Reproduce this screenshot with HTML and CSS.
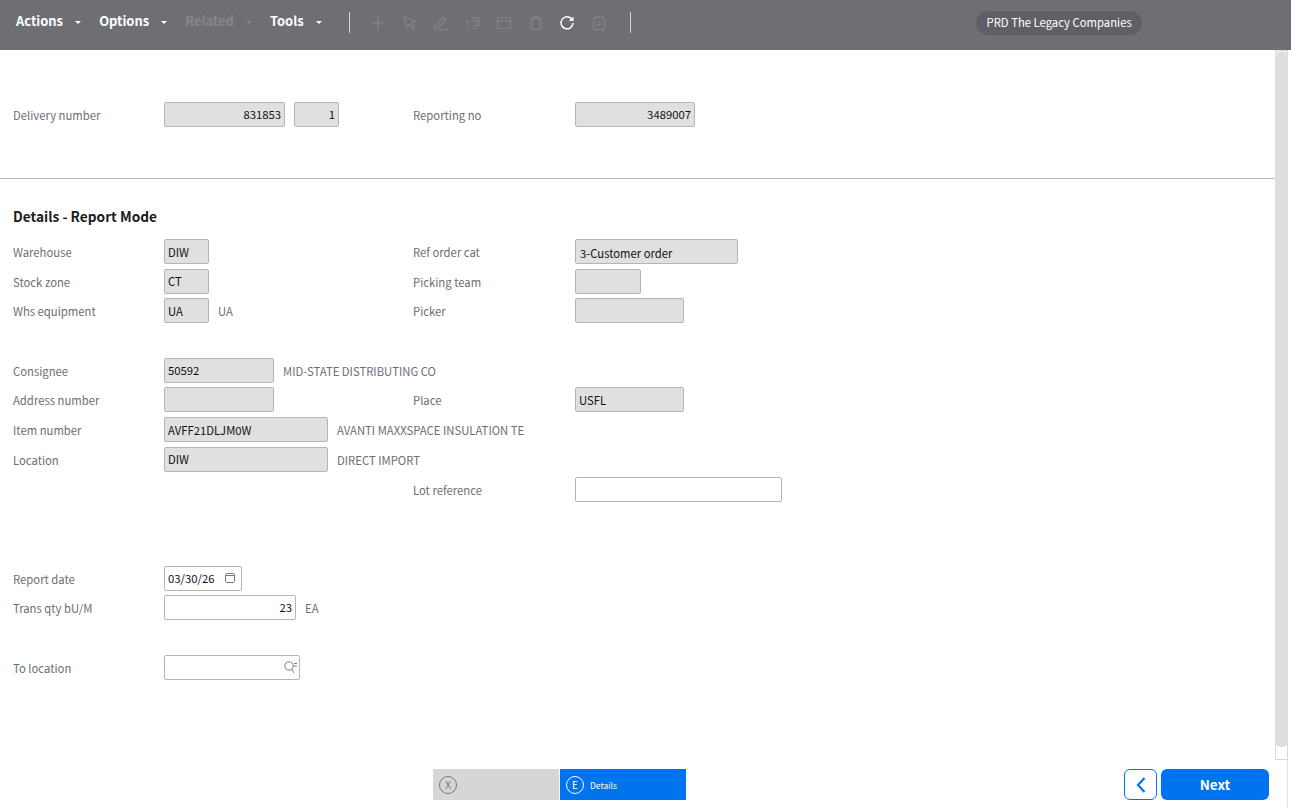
FILE: index.html
```html
<!DOCTYPE html>
<html lang="en">
<head>
<meta charset="utf-8">
<title>Details - Report Mode</title>
<link rel="stylesheet" href="styles.css">
</head>
<body>
<header class="topbar">
  <nav class="menus">
    <span class="menu">Actions<i class="caret"></i></span>
    <span class="menu">Options<i class="caret"></i></span>
    <span class="menu off">Related<i class="caret"></i></span>
    <span class="menu">Tools<i class="caret"></i></span>
  </nav>
  <div class="tools">
    <svg class="ico" viewBox="0 0 16 16"><path d="M8 1v14M1 8h14"/></svg>
    <svg class="ico" viewBox="0 0 16 16"><path d="M2 2l12 4-4.500 2 3 4.500-2 1.500-3-4.500-2.500 3z"/></svg>
    <svg class="ico" viewBox="0 0 16 16"><path d="M1.500 11.500L10.500 2.500l2.500 2.500L4 14H1.500zM6 14.500h9"/></svg>
    <svg class="ico" viewBox="0 0 16 16"><path d="M7 2.500h7v8h-3.500M8.500 5h3v3"/><path stroke-dasharray="2 1.500" d="M2.500 6.500h7.500v7.500H2.500z"/></svg>
    <svg class="ico" viewBox="0 0 16 16"><rect x="1.500" y="2.500" width="13" height="11" rx="1.500"/><path d="M1.500 6h13"/></svg>
    <svg class="ico" viewBox="0 0 16 16"><path d="M2 4h12M6 4V1.500h4V4M3.500 4v10.500h9V4"/></svg>
    <svg class="ico on" viewBox="0 0 16 16"><path d="M13 4.500A6 6 0 1 0 14 8"/><path class="fill" d="M14.500 1.500v4.500H10z"/></svg>
    <svg class="ico" viewBox="0 0 16 16"><rect x="2.500" y="2.500" width="11" height="12" rx="1.500"/><path d="M5 1v2M8 1v2M11 1v2M5.500 7h5M5.500 10h5"/></svg>
  </div>
  <div class="company">PRD The Legacy Companies</div>
</header>

<div class="body">
  <main class="content">
    <section class="head-form">
      <div class="row">
        <label class="lbl">Delivery number</label>
        <div class="cell">
          <span class="fld ro num w121">831853</span>
          <span class="fld ro num w45">1</span>
        </div>
        <label class="lbl">Reporting no</label>
        <div class="cell"><span class="fld ro num w120">3489007</span></div>
      </div>
    </section>
    <hr class="rule">
    <h2 class="title">Details - Report Mode</h2>
    <section class="form">
      <div class="row">
        <label class="lbl">Warehouse</label>
        <div class="cell"><span class="fld ro w45">DIW</span></div>
        <label class="lbl">Ref order cat</label>
        <div class="cell"><span class="fld ro sel w163">3-Customer order</span></div>
      </div>
      <div class="row">
        <label class="lbl">Stock zone</label>
        <div class="cell"><span class="fld ro w45">CT</span></div>
        <label class="lbl">Picking team</label>
        <div class="cell"><span class="fld ro w66"></span></div>
      </div>
      <div class="row">
        <label class="lbl">Whs equipment</label>
        <div class="cell"><span class="fld ro w45">UA</span><span class="desc">UA</span></div>
        <label class="lbl">Picker</label>
        <div class="cell"><span class="fld ro w109"></span></div>
      </div>
      <div class="row"></div>
      <div class="row">
        <label class="lbl">Consignee</label>
        <div class="cell"><span class="fld ro w110">50592</span><span class="desc">MID-STATE DISTRIBUTING CO</span></div>
      </div>
      <div class="row">
        <label class="lbl">Address number</label>
        <div class="cell"><span class="fld ro w110"></span></div>
        <label class="lbl">Place</label>
        <div class="cell"><span class="fld ro w109">USFL</span></div>
      </div>
      <div class="row">
        <label class="lbl">Item number</label>
        <div class="cell"><span class="fld ro w164">AVFF21DLJM0W</span><span class="desc">AVANTI MAXXSPACE INSULATION TE</span></div>
      </div>
      <div class="row">
        <label class="lbl">Location</label>
        <div class="cell"><span class="fld ro w164">DIW</span><span class="desc">DIRECT IMPORT</span></div>
      </div>
      <div class="row">
        <span></span><span></span>
        <label class="lbl">Lot reference</label>
        <div class="cell"><span class="fld w207"></span></div>
      </div>
      <div class="row"></div>
      <div class="row"></div>
      <div class="row">
        <label class="lbl">Report date</label>
        <div class="cell">
          <span class="fld w78 has-ico">03/30/26
            <svg class="fld-ico" viewBox="0 0 12 12"><rect x="1.500" y="1.500" width="9" height="9" rx="1"/><path d="M1.500 3.500h9"/></svg>
          </span>
        </div>
      </div>
      <div class="row">
        <label class="lbl">Trans qty bU/M</label>
        <div class="cell"><span class="fld num w132">23</span><span class="desc">EA</span></div>
      </div>
      <div class="row"></div>
      <div class="row">
        <label class="lbl">To location</label>
        <div class="cell">
          <span class="fld w136 has-ico end">
            <svg class="fld-ico search" viewBox="0 0 13 13"><circle cx="5" cy="5" r="4.200"/><path d="M7.800 8.300l2.200 3.700M10 2.500h3M10 5h3"/></svg>
          </span>
        </div>
      </div>
    </section>
  </main>
  <aside class="scroll"><div class="track"><div class="thumb"></div></div></aside>
</div>

<footer class="foot">
  <div class="steps">
    <div class="step idle"><span class="badge">X</span></div>
    <div class="step active"><span class="badge">E</span><span class="step-name">Details</span></div>
  </div>
  <div class="actions">
    <button class="back" type="button" aria-label="Back"><svg viewBox="0 0 12 18"><path d="M9.500 2L3 9l6.500 7"/></svg></button>
    <button class="next" type="button">Next</button>
  </div>
</footer>
</body>
</html>
```
FILE: styles.css
```css
* { box-sizing: border-box; }
html, body { margin: 0; height: 100%; }
body {
  width: 1291px;
  height: 808px;
  overflow: hidden;
  display: flex;
  flex-direction: column;
  background: #fff;
  font-family: "Noto Sans CJK SC", "Noto Sans", sans-serif;
  font-size: 11.300px;
  color: #1a1a1a;
}

/* top bar */
.topbar {
  flex: 0 0 50px;
  display: flex;
  align-items: center;
  background: #6e6f75;
}
.menus { display: flex; width: 349px; height: 100%; padding-left: 16px; align-items: center; }
.menu {
  display: flex;
  align-items: center;
  margin-top: -9px;
  color: #fff;
  font-size: 12.900px;
  font-weight: 700;
  margin-right: 18px;
}
.menu.off { color: #85868b; }
.caret {
  margin-left: 12.200px;
  margin-top: 3px;
  border-left: 3px solid transparent;
  border-right: 3px solid transparent;
  border-top: 3px solid currentColor;
}
.tools {
  display: flex;
  align-items: center;
  gap: 15.500px;
  width: 282px;
  height: 21px;
  margin-top: -5px;
  padding-left: 20px;
  border-left: 1px solid #d4d4d6;
  border-right: 1px solid #d4d4d6;
}
.ico { width: 16px; height: 16px; flex: none; fill: none; stroke: #85868b; stroke-width: 1.200; }
.ico.on { stroke: #fff; stroke-width: 1.500; }
.ico .fill { fill: #fff; stroke: none; }
.company {
  margin-left: 345px;
  margin-top: -4px;
  height: 24px;
  line-height: 23px;
  padding: 0 10.500px;
  border-radius: 12px;
  background: #5f5f65;
  color: #fff;
  font-size: 11.300px;
  white-space: nowrap;
}

/* body */
.body { flex: 0 0 710px; display: flex; }
.content { flex: 1; min-width: 0; }
.head-form { padding-top: 52px; height: 128px; }
.rule { margin: 0; border: 0; border-top: 1px solid #b9b9b9; }
.title {
  margin: 0;
  padding: 29px 0 0 13px;
  height: 60px;
  font-size: 13.700px;
  line-height: 17px;
  font-weight: 700;
  color: #1c1c1c;
}
.row {
  display: grid;
  grid-template-columns: 151px 249px 162px 1fr;
  align-items: start;
  height: 29.700px;
  padding-left: 13px;
}
.lbl { color: #6b6e76; line-height: 26px; white-space: nowrap; }
.row > .lbl:nth-child(3) { grid-column: 3; }
.cell { display: flex; align-items: center; }
.fld {
  display: flex;
  align-items: center;
  height: 25px;
  padding: 0 3px;
  border: 1px solid #b5b5b5;
  border-radius: 2px;
  background: #fff;
  color: #111;
  white-space: nowrap;
  flex: none;
}
.fld.ro { background: #e0e0e0; }
.fld.num { justify-content: flex-end; padding-bottom: 2px; }
.fld.sel { padding: 3px 4px 0; }
.fld.has-ico { justify-content: space-between; }
.fld.end { justify-content: flex-end; }
.cell .fld + .fld { margin-left: 9px; }
.desc { margin-left: 9px; color: #6b6e76; white-space: nowrap; padding-top: 1px; }
.fld-ico { width: 12px; height: 12px; margin-right: 2px; fill: none; stroke: #77797f; stroke-width: 1; }
.fld-ico.search { width: 13px; height: 13px; margin-right: -1px; }
.w45 { width: 45px; } .w66 { width: 66px; } .w78 { width: 78px; }
.w109 { width: 109px; } .w110 { width: 110px; } .w120 { width: 120px; }
.w121 { width: 121px; } .w132 { width: 132px; } .w136 { width: 136px; }
.w163 { width: 163px; } .w164 { width: 164px; } .w207 { width: 207px; }

/* scrollbar */
.scroll {
  flex: 0 0 16px;
  padding-right: 3px;
}
.track {
  height: 710px;
  border: 1px solid #d9d9d9;
  border-top: 0;
}
.thumb {
  position: relative;
  height: 697px;
  margin: 0 -1px;
  background: #dedede;
  border-radius: 0 0 6px 6px;
}
.thumb::before {
  content: "";
  position: absolute;
  left: 2px;
  right: 2px;
  top: 1px;
  height: 3px;
  border: 1px solid #f4f4f4;
  border-bottom: 0;
}

/* footer */
.foot {
  flex: 1;
  position: relative;
  display: flex;
  justify-content: flex-end;
  align-items: flex-start;
  padding: 9px 22px 0 0;
}
.foot::after {
  content: "";
  position: absolute;
  top: 0;
  bottom: 0;
  right: 3px;
  width: 1px;
  background: #e2e2e2;
}
.steps { position: absolute; left: 433px; top: 9px; display: flex; gap: 1px; }
.step { width: 126px; height: 31px; display: flex; align-items: center; padding-left: 6px; }
.step.idle { background: #d6d6d6; color: #77797f; }
.step.active { background: #0073ee; color: #fff; }
.badge {
  width: 18px; height: 18px;
  display: flex; align-items: center; justify-content: center;
  border: 1px solid currentColor;
  border-radius: 50%;
  font-size: 10px;
  flex: none;
}
.step-name { margin-left: 6px; font-size: 8.500px; }
.actions { display: flex; gap: 4px; }
.back {
  width: 33px; height: 31px; padding: 0;
  display: flex; align-items: center; justify-content: center;
  border: 1px solid #0073ee;
  border-radius: 6px;
  background: #fff;
}
.back svg { width: 12px; height: 18px; fill: none; stroke: #0073ee; stroke-width: 2.200; }
.next {
  width: 108px; height: 31px; padding: 0 0 2px;
  border: 0;
  border-radius: 6px;
  background: #0073ee;
  color: #fff;
  font: 700 13.500px "Noto Sans CJK SC", "Noto Sans", sans-serif;
}
```
